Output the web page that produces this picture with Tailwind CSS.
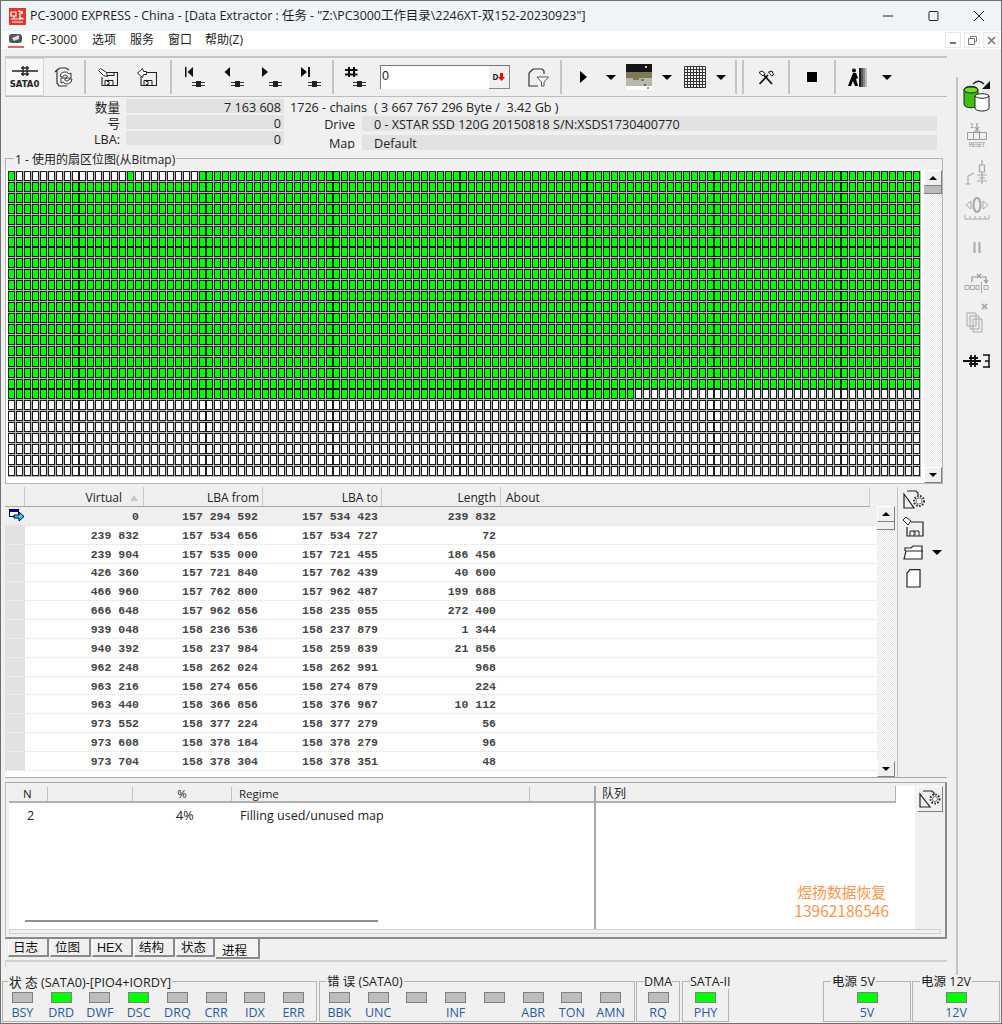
<!DOCTYPE html>
<html lang="zh">
<head>
  <meta charset="UTF-8" />
  <title>PC-3000 EXPRESS</title>
  <script src="https://cdn.jsdelivr.net/npm/@tailwindcss/browser@4"></script>
</head>
<body class="bg-[#f0f0f0]">
<div class="w-[1002px] h-[1024px] overflow-hidden flex flex-col border border-[#707070] bg-[#f0f0f0] text-[12px] leading-[14px] text-[#222] font-['Open_Sans','Noto_Sans_CJK_SC',sans-serif]">

  <!-- title bar -->
  <div class="h-[30px] shrink-0 flex items-center bg-[#eff4f9] relative">
    <svg class="ml-[8px] mr-[4px]" width="17" height="17" viewBox="0 0 17 17"><rect width="17" height="17" fill="#e8332a"/><path d="M2 4h5v4H2zM9 3h2v7h3M5 8v3M2 11h13M3 14h11" stroke="#fff" stroke-width="1.2" fill="none"/><rect x="12" y="3" width="2" height="3" fill="#fff"/></svg>
    <span class="text-[12.450px] text-[#1c1c1c] whitespace-nowrap">PC-3000 EXPRESS - China - [Data Extractor : 任务 - "Z:\PC3000工作目录\2246XT-双152-20230923"]</span>
    <div class="ml-auto flex items-center">
      <svg width="45" height="20" viewBox="0 0 45 20"><path d="M17 10h10" stroke="#222" stroke-width="1"/></svg>
      <svg width="45" height="20" viewBox="0 0 45 20"><rect x="18" y="5.5" width="9" height="9" rx="1" fill="none" stroke="#222"/></svg>
      <svg width="45" height="20" viewBox="0 0 45 20"><path d="M18 5l10 10M28 5L18 15" stroke="#222"/></svg>
    </div>
  </div>

  <!-- menu bar -->
  <div class="h-[18px] shrink-0 bg-white flex items-center">
    <svg class="ml-[7px] mr-[7px]" width="16" height="15" viewBox="0 0 16 15"><rect x="1" y="1" width="13" height="9" rx="3" fill="#555"/><path d="M4 5l7-3v4l-5 2z" fill="#ddd"/><rect y="13" width="16" height="2" fill="#e8606a"/></svg>
    <span class="w-[61px]">PC-3000</span>
    <span class="w-[38px]">选项</span>
    <span class="w-[38px]">服务</span>
    <span class="w-[37px]">窗口</span>
    <span>帮助(Z)</span>
    <div class="ml-auto mr-[2px] flex gap-[3px]">
      <div class="w-[16px] h-[16px] border border-[#e8e8e8] flex items-center justify-center"><div class="w-[6px] h-[2px] mt-[5px] bg-[#777]"></div></div>
      <div class="w-[16px] h-[16px] border border-[#e8e8e8] flex items-center justify-center"><svg width="9" height="9" viewBox="0 0 9 9"><path d="M2.5 2V.5h6v5H7M.5 2.5h6v6h-6z" fill="none" stroke="#777"/></svg></div>
      <div class="w-[16px] h-[16px] border border-[#e8e8e8] flex items-center justify-center"><svg width="9" height="9" viewBox="0 0 9 9"><path d="M1 1l7 7M8 1L1 8" stroke="#777" stroke-width="1.6"/></svg></div>
    </div>
  </div>

  <!-- workspace -->
  <div class="h-[926px] shrink-0 flex">
    <div class="w-[942px] shrink-0 ml-[4px] pt-[7px] flex flex-col">

      <!-- toolbar -->
      <div class="h-[41px] shrink-0 flex items-center border-t-2 border-b border-t-[#c6c6c6] border-b-[#bcbcbc]">
        <div class="w-[39px] h-[38px] bg-[#f7f7f7] border border-[#d4d4d4] flex flex-col items-center justify-center">
          <svg width="28" height="12" viewBox="0 0 28 12"><path d="M1 6h26M10 3h8M10 9h8M12 1v10M16 1v10" stroke="#222" stroke-width="1.4"/></svg>
          <span class="mt-[2px] text-[8.5px] leading-[10px] font-bold font-['DejaVu_Sans',sans-serif]">SATA0</span>
        </div>
        <div class="w-[40px] flex justify-center">
          <svg width="22" height="20" viewBox="0 0 22 20"><path d="M4 3l3-2h6l3 2M2 5l2-2v13l2 3h8" fill="none" stroke="#333" stroke-width="1.2"/><path d="M7 9a5 5 0 0 1 9-2l2-1v5h-5l1.500-2a3 3 0 0 0-5 1zM19 12a5 5 0 0 1-9 3l-2 1v-5h5l-1.500 2a3 3 0 0 0 5-1z" fill="#fff" stroke="#333"/></svg>
        </div>
        <div class="w-[2px] h-[34px] bg-[#c4c4c4]"></div>
        <div class="w-[44px] flex justify-center">
          <svg width="20" height="18" viewBox="0 0 20 18"><path d="M9 4.500h10.500v13H4V9" fill="none" stroke="#222" stroke-width="1.1"/><path d="M7 17.500v-5h8v5M9 13.500h2v3H9M8 4.500v3h8v-3" fill="none" stroke="#222"/><path d="M.5 2.500l2-2 6 4 1 4-4-1z" fill="#fff" stroke="#222"/></svg>
        </div>
        <div class="w-[34px] mr-[6px] flex justify-center">
          <svg width="20" height="18" viewBox="0 0 20 18"><path d="M10 4.500h9.500v13H4V9" fill="none" stroke="#222" stroke-width="1.1"/><path d="M7 17.500v-5h8v5M9 13.500h2v3H9" fill="none" stroke="#222"/><path d="M.5 5l5-4.500 1 3h3v3h-3l-1 3z" fill="#fff" stroke="#222"/></svg>
        </div>
        <div class="w-[2px] h-[34px] bg-[#c4c4c4]"></div>
        <div class="w-[45px] flex justify-center">
          <svg width="20" height="21" viewBox="0 0 20 21"><path d="M0 0h1.500v10H0zM8 0v10L2.500 5z" fill="#111"/><path d="M7 15.500h13M7 18.500h13" stroke="#333"/><rect x="11" y="14" width="5" height="6" fill="#222"/></svg>
        </div>
        <div class="w-[34px] flex justify-center">
          <svg width="20" height="21" viewBox="0 0 20 21"><path d="M6 0v10L.5 5z" fill="#111"/><path d="M7 15.500h13M7 18.500h13" stroke="#333"/><rect x="11" y="14" width="5" height="6" fill="#222"/></svg>
        </div>
        <div class="w-[42px] flex justify-center">
          <svg width="20" height="21" viewBox="0 0 20 21"><path d="M0 0v10l6-5z" fill="#111"/><path d="M7 15.500h13M7 18.500h13" stroke="#333"/><rect x="11" y="14" width="5" height="6" fill="#222"/></svg>
        </div>
        <div class="w-[35px] flex justify-center">
          <svg width="20" height="21" viewBox="0 0 20 21"><path d="M0 0v10l6-5zM7 0h2v10H7z" fill="#111"/><path d="M7 15.500h13M7 18.500h13" stroke="#333"/><rect x="11" y="14" width="5" height="6" fill="#222"/></svg>
        </div>
        <div class="w-[2px] h-[34px] ml-[4px] bg-[#c4c4c4]"></div>
        <div class="w-[42px] flex justify-center">
          <svg width="21" height="21" viewBox="0 0 21 21"><path d="M4 0v10M9 0v10M0 3h12.500M0 7.500h12.500" stroke="#111" stroke-width="2"/><path d="M8 15.500h13M8 18.500h13" stroke="#333"/><rect x="12" y="14" width="5" height="6" fill="#222"/></svg>
        </div>
        <div class="w-[130px] h-[24px] ml-[4px] flex border-t border-l border-[#777] border-b-[#ddd] border-r-[#ddd] bg-white">
          <span class="pl-[1px] pt-[3px] text-[12.500px] font-['Liberation_Sans',sans-serif]">0</span>
          <div class="ml-auto w-[21px] bg-[#f0f0f0] border-b border-r border-[#888] flex items-center justify-center text-[8px] font-bold"><span>D</span><svg width="7" height="8" viewBox="0 0 7 8"><path d="M2 0h3v4h2L3.500 8 0 4h2z" fill="#f00"/></svg></div>
        </div>
        <div class="w-[50px] pl-[6px] flex justify-center">
          <svg width="21" height="19" viewBox="0 0 21 19"><path d="M1 5l4-4h9l2 2v3M10 18H1V5" fill="none" stroke="#333" stroke-width="1.2"/><path d="M9 9h11.500l-4.500 5v4h-2.500v-4z" fill="#fff" stroke="#555"/></svg>
        </div>
        <div class="w-[2px] h-[34px] bg-[#c4c4c4]"></div>
        <div class="w-[42px] flex justify-center"><div class="w-0 h-0 border-y-[6px] border-y-transparent border-l-[7px] border-l-black"></div></div>
        <div class="w-[14px] flex justify-center"><div class="w-0 h-0 border-x-[5px] border-x-transparent border-t-[5px] border-t-black"></div></div>
        <svg class="ml-[8px]" width="26" height="26" viewBox="0 0 26 26"><rect width="26" height="8" fill="#151515"/><rect y="8" width="26" height="6" fill="#7c7a56"/><rect y="14" width="26" height="8" fill="#b8b8ac"/><rect x="7" y="12" width="6" height="4" fill="#7c7a56"/><rect x="15" y="15" width="3" height="2" fill="#7c7a56"/><rect x="19" y="2" width="2" height="2" fill="#ccc"/><rect y="22" width="26" height="4" fill="#fff"/><rect x="18" y="20" width="2" height="2" fill="#666"/><rect x="21" y="23" width="2" height="2" fill="#999"/></svg>
        <div class="w-[30px] flex justify-center"><div class="w-0 h-0 border-x-[5px] border-x-transparent border-t-[5px] border-t-black"></div></div>
        <svg class="ml-[2px]" width="22" height="22" viewBox="0 0 22 22"><path d="M.5 .5h21v21H.5zM.5 3.500h21M.5 6.500h21M.5 9.500h21M.5 12.500h21M.5 15.500h21M.5 18.500h21M3.500 .5v21M6.500 .5v21M9.500 .5v21M12.500 .5v21M15.500 .5v21M18.500 .5v21" fill="none" stroke="#333"/></svg>
        <div class="w-[29px] flex justify-center"><div class="w-0 h-0 border-x-[5px] border-x-transparent border-t-[5px] border-t-black"></div></div>
        <div class="w-[2px] h-[34px] bg-[#c4c4c4]"></div>
        <div class="w-[2px] h-[34px] ml-[5px] bg-[#c4c4c4]"></div>
        <div class="w-[44px] flex justify-center">
          <svg width="16" height="15" viewBox="0 0 16 15"><path d="M1.500 14L10 5M5 4l9 10" stroke="#111" stroke-width="1.800"/><path d="M1 2.500l3-1.500 3 2.500-2 2.500zM10.500 2l3.500-1 1.500 4-2 1-1-1.500z" fill="#fff" stroke="#111"/></svg>
        </div>
        <div class="w-[2px] h-[34px] bg-[#c4c4c4]"></div>
        <div class="w-[44px] flex justify-center"><div class="w-[10px] h-[10px] bg-black"></div></div>
        <div class="w-[2px] h-[34px] bg-[#c4c4c4]"></div>
        <div class="w-[42px] flex justify-center">
          <svg width="19" height="19" viewBox="0 0 19 19"><circle cx="6" cy="2.500" r="2" fill="#000"/><path d="M5 5L3 10l-3 8h3l2-5 2 5h3l-2-7 2-1-2-5z" fill="#000"/><rect x="11" width="2" height="19" fill="#222"/><rect x="13" width="2" height="19" fill="#555"/><rect x="15" width="2" height="19" fill="#888"/><rect x="17" width="2" height="19" fill="#bbb"/></svg>
        </div>
        <div class="w-[18px] flex justify-center"><div class="w-0 h-0 border-x-[5px] border-x-transparent border-t-[5px] border-t-black"></div></div>
      </div>

      <!-- info -->
      <div class="h-[57px] shrink-0 flex pt-[2px] text-[12.600px] leading-[17px]">
        <div class="w-[115px] shrink-0 flex flex-col gap-[2px] items-end">
          <div class="h-[14px]">数量</div>
          <div class="h-[14px]">号</div>
          <div class="h-[14px]">LBA:</div>
        </div>
        <div class="w-[158px] shrink-0 ml-[6px] flex flex-col gap-[2px]">
          <div class="h-[14px] bg-[#e2e2e2] text-right pr-[3px]">7 163 608</div>
          <div class="h-[14px] bg-[#e2e2e2] text-right pr-[3px]">0</div>
          <div class="h-[14px] bg-[#e2e2e2] text-right pr-[3px]">0</div>
        </div>
        <div class="ml-[6px] flex flex-col">
          <div class="h-[14px] flex whitespace-pre">
            <span class="w-[84px]">1726 - chains</span>
            <span>( 3 667 767 296 Byte /  3.42 Gb )</span>
          </div>
          <div class="h-[15px] mt-[3px] flex">
            <span class="w-[65px] text-right">Drive</span>
            <div class="w-[575px] ml-[7px] bg-[#e2e2e2] pl-[12px]">0 - XSTAR SSD 120G 20150818 S/N:XSDS1730400770</div>
          </div>
          <div class="h-[15px] mt-[4px] flex">
            <span class="w-[65px] text-right overflow-hidden h-[14px]">Map</span>
            <div class="w-[575px] ml-[7px] bg-[#e2e2e2] pl-[12px]">Default</div>
          </div>
        </div>
      </div>

      <!-- bitmap group -->
      <div class="h-[326px] shrink-0 mt-[4px] mr-[4px] border border-[#b4b4b4] relative flex flex-col">
        <span class="absolute left-[8px] top-[-6px] bg-[#f0f0f0] px-[1px]">1 - 使用的扇区位图(从Bitmap)</span>
        <div class="h-[11px] shrink-0"></div>
        <div class="flex-1 bg-white flex items-start">
          <div id="bitmap" class="w-[913px] h-[306px] ml-[2px] mt-[1px] bg-[#b4b4b4] grid grid-cols-[repeat(115,7.940px)] auto-rows-[10.930px]"></div>
          <div class="w-[18px] h-full ml-auto flex flex-col bg-[repeating-conic-gradient(#e4e4e4_0_25%,#fff_0_50%)] bg-[length:2px_2px]">
            <div class="h-[16px] bg-[#f0f0f0] border-t border-l border-t-white border-l-white border-b border-r border-b-[#808080] border-r-[#808080] flex items-center justify-center"><div class="w-0 h-0 border-x-[4px] border-x-transparent border-b-[4px] border-b-black"></div></div>
            <div class="h-[8px] bg-[#bbb] border-b border-r border-[#808080]"></div>
            <div class="mt-auto h-[16px] bg-[#f0f0f0] border-t border-l border-t-white border-l-white border-b border-r border-b-[#808080] border-r-[#808080] flex items-center justify-center"><div class="w-0 h-0 border-x-[4px] border-x-transparent border-t-[4px] border-t-black"></div></div>
          </div>
        </div>
      </div>

      <!-- chains table -->
      <div class="h-[291px] shrink-0 mt-[3px] flex border-b border-[#a8a8a8]">
        <div class="w-[872px] shrink-0 flex flex-col">
          <div class="h-[20px] shrink-0 w-[865px] grid grid-cols-[20px_119px_119px_119px_119px_369px] border-b border-[#a8a8a8] bg-[#efefef]">
            <div class="border-r border-[#c8c8c8]"></div>
            <div class="border-r border-[#c8c8c8] flex items-center justify-end pt-[2px]">Virtual<div class="ml-[8px] mr-[5px] w-0 h-0 border-x-[4px] border-x-transparent border-b-[6px] border-b-[#c8c8c8]"></div></div>
            <div class="border-r border-[#c8c8c8] text-right pr-[3px] pt-[4px]">LBA from</div>
            <div class="border-r border-[#c8c8c8] text-right pr-[3px] pt-[4px]">LBA to</div>
            <div class="border-r border-[#c8c8c8] text-right pr-[4px] pt-[4px]">Length</div>
            <div class="border-r border-[#c8c8c8] pl-[5px] pt-[4px]">About</div>
          </div>
          <div id="rows" class="flex-1 bg-white overflow-hidden text-[11.500px] font-['Liberation_Mono',monospace] font-bold text-[#444]"></div>
        </div>
        <div class="w-[18px] shrink-0 flex flex-col mt-[19px] bg-[repeating-conic-gradient(#e4e4e4_0_25%,#fff_0_50%)] bg-[length:2px_2px]">
          <div class="h-[16px] bg-[#f0f0f0] border-t border-l border-t-white border-l-white border-b border-r border-b-[#808080] border-r-[#808080] flex items-center justify-center"><div class="w-0 h-0 border-x-[4px] border-x-transparent border-b-[4px] border-b-black"></div></div>
          <div class="h-[8px] bg-[#f0f0f0] border-b border-r border-[#808080]"></div>
          <div class="mt-auto h-[16px] bg-[#f0f0f0] border-t border-l border-t-white border-l-white border-b border-r border-b-[#808080] border-r-[#808080] flex items-center justify-center"><div class="w-0 h-0 border-x-[4px] border-x-transparent border-t-[4px] border-t-black"></div></div>
        </div>
        <div class="flex-1 pl-[5px] pt-[3px] flex flex-col border-l border-[#c4c4c4] ml-[2px]">
          <svg width="22" height="20" viewBox="0 0 22 20"><path d="M4 1h9l2 2v2M11 18H1V4z" fill="none" stroke="#222" stroke-width="1.200"/><circle cx="16" cy="11" r="5" fill="none" stroke="#222" stroke-width="2" stroke-dasharray="1.500 1.500"/><circle cx="16" cy="11" r="3" fill="#fff" stroke="#444" stroke-width="0.700"/></svg>
          <svg class="mt-[7px]" width="21" height="20" viewBox="0 0 21 20"><path d="M8 5h12v14H4V10" fill="none" stroke="#222" stroke-width="1.200"/><path d="M7 19v-5h9v5M10 15h2v3h-2" fill="none" stroke="#222"/><path d="M0 3l3-3 5 4-3 4z" fill="#fff" stroke="#222"/></svg>
          <div class="flex items-center mt-[8px]">
            <svg width="21" height="15" viewBox="0 0 21 15"><path d="M2 6V3h6l2-2h9v13H1l2-8h17" fill="#fff" stroke="#222" stroke-width="1.200"/></svg>
            <div class="ml-[8px] w-0 h-0 border-x-[5px] border-x-transparent border-t-[5px] border-t-black"></div>
          </div>
          <svg class="mt-[9px] ml-[3px]" width="15" height="19" viewBox="0 0 15 19"><path d="M4 .7h10V18H1V4z" fill="#fff" stroke="#222" stroke-width="1.200"/></svg>
        </div>
      </div>

      <!-- lower panel -->
      <div class="h-[157px] shrink-0 mt-[4px] border border-t-[#a8a8a8] border-l-[#c0c0c0] border-r-2 border-b-2 border-r-[#8a8a8a] border-b-[#8a8a8a] pl-[3px] pt-[3px] pr-[3px] flex flex-col">
        <div class="h-[143px] shrink-0 flex">
          <div class="w-[587px] shrink-0 bg-white flex flex-col border-r-2 border-[#a8a8a8]">
            <div class="h-[17px] shrink-0 bg-[#efefef] grid grid-cols-[39px_85px_99px_298px_66px] border-b-2 border-[#b0b0b0] text-[11.500px] pt-[1px]">
              <div class="border-r border-[#c0c0c0] pl-[14px]">N</div>
              <div class="border-r border-[#c0c0c0]"></div>
              <div class="border-r border-[#c0c0c0] text-center">%</div>
              <div class="border-r border-[#c0c0c0] pl-[7px]">Regime</div>
              <div></div>
            </div>
            <div class="h-[26px] shrink-0 grid grid-cols-[39px_85px_99px_298px] items-center text-[12.600px]">
              <div class="pl-[18px]">2</div>
              <div></div>
              <div class="pl-[43px]">4%</div>
              <div class="pl-[8px]">Filling used/unused map</div>
            </div>
            <div class="mt-auto mb-[7px] ml-[16px] w-[353px] h-[2px] bg-[#909090]"></div>
          </div>
          <div class="w-[319px] shrink-0 bg-white flex flex-col relative">
            <div class="h-[17px] shrink-0 w-[300px] bg-[#efefef] border-b-2 border-r border-[#b0b0b0] pl-[6px] pt-[1px]">队列</div>
            <div class="absolute right-[26px] bottom-[9px] flex flex-col items-center text-[#f9954f] font-['Noto_Sans_CJK_SC',sans-serif]">
              <div class="text-[14.800px] leading-[19px] h-[19px]">煜扬数据恢复</div>
              <div class="text-[15.500px] leading-[19px] h-[19px]">13962186546</div>
            </div>
          </div>
          <div class="flex-1 pl-[1px]">
            <div class="w-[26px] h-[26px] ml-[1px] border-t border-l border-white border-r border-b border-r-[#808080] border-b-[#808080] flex items-center justify-center">
              <svg width="22" height="18" viewBox="0 0 22 18"><path d="M4 1h9l2 2v2M11 17H1V4z" fill="none" stroke="#222" stroke-width="1.200"/><circle cx="16" cy="9" r="4.500" fill="none" stroke="#222" stroke-width="2" stroke-dasharray="1.500 1.500"/><circle cx="16" cy="9" r="2.500" fill="#fff" stroke="#444" stroke-width="0.700"/></svg>
            </div>
          </div>
        </div>
        <div class="h-[5px] shrink-0 border border-[#cfcfcf] mr-[1px]"></div>
      </div>

      <!-- tabs -->
      <div class="h-[20px] shrink-0 flex pl-[3px] text-[#111] text-[12.500px]">
        <div class="w-[41px] h-[18px] mr-[1px] pl-[4px] pt-[2px] border-b-2 border-r-2 border-l border-l-white border-[#8a8a8a]">日志</div>
        <div class="w-[41px] h-[18px] mr-[1px] pl-[4px] pt-[2px] border-b-2 border-r-2 border-l border-l-white border-[#8a8a8a]">位图</div>
        <div class="w-[41px] h-[18px] mr-[1px] pl-[4px] pt-[2px] border-b-2 border-r-2 border-l border-l-white border-[#8a8a8a] font-['Liberation_Sans',sans-serif]">HEX</div>
        <div class="w-[41px] h-[18px] mr-[1px] pl-[4px] pt-[2px] border-b-2 border-r-2 border-l border-l-white border-[#8a8a8a]">结构</div>
        <div class="w-[39px] h-[18px] mr-[1px] pl-[4px] pt-[2px] border-b-2 border-r-2 border-l border-l-white border-[#8a8a8a]">状态</div>
        <div class="w-[44px] h-[20px] pl-[6px] pt-[5px] border-b-2 border-r-2 border-[#8a8a8a] bg-[#f3f3f3]">进程</div>
      </div>
      <div class="h-[7px] shrink-0 mt-[1px] border-t-2 border-l border-[#d0d0d0]"></div>
    </div>

    <!-- right sidebar -->
    <div class="flex-1 ml-[9px] mt-[28px] border-l-2 border-[#c4c4c4] flex flex-col items-center pr-[6px] pt-[3px]">
      <svg width="28" height="32" viewBox="0 0 28 32"><path d="M1 10c0-5 14-5 14 0v14c0 5-14 5-14 0z" fill="#3fbf10" stroke="#222"/><ellipse cx="8" cy="10" rx="7" ry="3" fill="#6fe030" stroke="#222"/><path d="M12 16c0-3 14-3 14 0v12c0 4-14 4-14 0z" fill="#fff" stroke="#222"/><path d="M12 16c2 3 12 3 14 0" fill="none" stroke="#222"/><path d="M10 4c4-4 8-3 11 0" fill="none" stroke="#222" stroke-width="1.300"/><path d="M27 1v8h-8z" fill="#111"/></svg>
      <svg class="mt-[10px]" width="22" height="26" viewBox="0 0 22 26"><text x="4" y="6" font-size="7" fill="#888" font-family="Liberation Sans">1</text><path d="M11 1v6M9 5l2 3 2-3M8 9h6" fill="none" stroke="#888"/><path d="M1.500 10.500h19v7h-19zM7.500 10.500v7M13.500 10.500v7" fill="none" stroke="#999"/><text x="2.500" y="25" font-size="6.500" fill="#999" font-family="DejaVu Sans" textLength="17">RESET</text></svg>
      <svg class="mt-[12px]" width="26" height="26" viewBox="0 0 26 26"><path d="M18 0v5M15.500 5h5v7h-5zM18 12v12M13 15h10M15 18h6M13 21h10M1 24h6M4 24v-8l6-3" fill="none" stroke="#aaa" stroke-width="1.200"/></svg>
      <svg class="mt-[11px]" width="26" height="26" viewBox="0 0 26 26"><ellipse cx="13" cy="8" rx="3.500" ry="7" fill="none" stroke="#aaa" stroke-width="2.200"/><path d="M7 4v8L2 8zM19 4v8l5-4zM1 22h24M1 18v4M6 19v3M11 19v3M16 19v3M21 19v3M25 18v4" fill="none" stroke="#aaa"/></svg>
      <svg class="mt-[18px]" width="10" height="13" viewBox="0 0 10 13"><path d="M2.500 1v11M7.500 1v11" stroke="#aaa" stroke-width="2"/></svg>
      <svg class="mt-[19px]" width="26" height="20" viewBox="0 0 26 20"><path d="M8 9V4h14v5M13 1l4 4M17 1l-4 4M20 7l2 3 2-3" fill="none" stroke="#999" stroke-width="1.200"/><path d="M1 12.500h4v4H1zM6.500 12.500h4v4h-4zM12 12.500h3v4h-3zM20 12.500h4v4h-4zM17.500 9v11" fill="none" stroke="#aaa"/></svg>
      <svg class="mt-[10px]" width="24" height="31" viewBox="0 0 24 31"><path d="M2 10h9v13H2zM5 13h9v13H5zM8 16h9v13H8z" fill="#eee" stroke="#aaa"/><path d="M17 1l5 5M22 1l-5 5" stroke="#aaa" stroke-width="1.800"/></svg>
      <svg class="mt-[20px]" width="28" height="14" viewBox="0 0 28 14"><path d="M0 7h18M6 4h9M6 10h9M8 1v12M12 1v12" stroke="#111" stroke-width="1.800"/><path d="M20 1h7M20 13h7M26 1v12M22 7h4" fill="none" stroke="#111" stroke-width="1.500"/></svg>
    </div>
  </div>

  <!-- status groups -->
  <div class="h-[47px] shrink-0 pt-[6px] pl-[1px] flex text-[12.500px]">
    <div class="w-[315px] h-[41px] border border-[#b4b4b4] relative">
      <span class="absolute left-[5px] top-[-7px] bg-[#f0f0f0] px-[1px] whitespace-nowrap text-[12.700px]">状 态 (SATA0)-[PIO4+IORDY]</span>
      <div id="ledsA" class="grid grid-cols-[repeat(8,38.750px)] pt-[10px]"></div>
    </div>
    <div class="w-[316px] h-[41px] ml-[2px] border border-[#b4b4b4] relative">
      <span class="absolute left-[6px] top-[-7px] bg-[#f0f0f0] px-[1px] whitespace-nowrap">错 误 (SATA0)</span>
      <div id="ledsB" class="grid grid-cols-[repeat(8,38.750px)] pt-[10px]"></div>
    </div>
    <div class="w-[44px] h-[41px] ml-[1px] border border-[#b4b4b4] relative">
      <span class="absolute left-[7px] top-[-7px] bg-[#f0f0f0] whitespace-nowrap">DMA</span>
      <div class="flex flex-col items-center pt-[10px]"><div class="w-[21px] h-[11px] border border-[#808080] bg-[#bdbdbd]"></div><span class="mt-[3px] text-[#2b5c9e]">RQ</span></div>
    </div>
    <div class="w-[47px] h-[41px] ml-[2px] border border-[#b4b4b4] relative">
      <span class="absolute left-[7px] top-[-7px] bg-[#f0f0f0] whitespace-nowrap">SATA-II</span>
      <div class="flex flex-col items-center pt-[10px]"><div class="w-[21px] h-[11px] border border-[#808080] bg-[#00ff00]"></div><span class="mt-[3px] text-[#2b5c9e]">PHY</span></div>
    </div>
    <div class="w-[88px] h-[41px] ml-[94px] border border-[#b4b4b4] relative">
      <span class="absolute left-[7px] top-[-7px] bg-[#f0f0f0] px-[1px] whitespace-nowrap">电源 5V</span>
      <div class="flex flex-col items-center pt-[10px]"><div class="w-[21px] h-[11px] border border-[#808080] bg-[#00ff00]"></div><span class="mt-[3px] text-[#2b5c9e]">5V</span></div>
    </div>
    <div class="w-[88px] h-[41px] ml-[1px] border border-[#b4b4b4] relative">
      <span class="absolute left-[7px] top-[-7px] bg-[#f0f0f0] px-[1px] whitespace-nowrap">电源 12V</span>
      <div class="flex flex-col items-center pt-[10px]"><div class="w-[21px] h-[11px] border border-[#808080] bg-[#00ff00]"></div><span class="mt-[3px] text-[#2b5c9e]">12V</span></div>
    </div>
  </div>
</div>

<script>
  // 位图
  var cells = [];
  for (var r = 0; r < 28; r++) {
    for (var c = 0; c < 115; c++) {
      var green = r < 20 || (r === 20 && c < 79);
      if (r === 0 && c > 0 && c < 24 && c !== 15) green = false;
      cells.push('<div class="w-[7px] h-[10px] border border-[#1c1c1c] ' + (green ? 'bg-[#00ff00]' : 'bg-white') + '"></div>');
    }
  }
  document.getElementById('bitmap').innerHTML = cells.join('');

  // 链表
  var rows = [
    ['0','157 294 592','157 534 423','239 832'],
    ['239 832','157 534 656','157 534 727','72'],
    ['239 904','157 535 000','157 721 455','186 456'],
    ['426 360','157 721 840','157 762 439','40 600'],
    ['466 960','157 762 800','157 962 487','199 688'],
    ['666 648','157 962 656','158 235 055','272 400'],
    ['939 048','158 236 536','158 237 879','1 344'],
    ['940 392','158 237 984','158 259 839','21 856'],
    ['962 248','158 262 024','158 262 991','968'],
    ['963 216','158 274 656','158 274 879','224'],
    ['963 440','158 366 856','158 376 967','10 112'],
    ['973 552','158 377 224','158 377 279','56'],
    ['973 608','158 378 184','158 378 279','96'],
    ['973 704','158 378 304','158 378 351','48']
  ];
  var arrow = '<svg width="16" height="13" viewBox="0 0 16 13"><rect x="0.500" y="0.500" width="9" height="7" fill="#fff" stroke="#003"/><rect x="1" y="1" width="8" height="2" fill="#00a"/><path d="M5 6h5V3l5 4.500-5 4.500V9H5z" fill="#2fd0f0" stroke="#003"/></svg>';
  document.getElementById('rows').innerHTML = rows.map(function (row, i) {
    return '<div class="h-[18.850px] grid grid-cols-[20px_119px_119px_119px_119px_1fr] border-b border-dotted border-[#dcdcdc] items-center text-right ' + (i === 0 ? 'bg-[#efefef]' : '') + '">' +
      '<div class="h-full flex items-center pl-[4px] ' + (i === 0 ? '' : 'bg-[#e2e2e2]') + '">' + (i === 0 ? arrow : '') + '</div>' +
      '<div class="pr-[5px] pt-[2px]">' + row[0] + '</div><div class="pr-[5px] pt-[2px]">' + row[1] + '</div><div class="pr-[4px] pt-[2px]">' + row[2] + '</div><div class="pr-[5px] pt-[2px]">' + row[3] + '</div><div></div></div>';
  }).join('');

  // 状态灯
  function leds(id, names, on) {
    document.getElementById(id).innerHTML = names.map(function (n) {
      return '<div class="flex flex-col items-center"><div class="w-[21px] h-[11px] border border-[#808080] ' + (on.indexOf(n) >= 0 ? 'bg-[#00ff00]' : 'bg-[#bdbdbd]') + '"></div><span class="mt-[3px] h-[14px] text-[#2b5c9e]">' + n + '</span></div>';
    }).join('');
  }
  leds('ledsA', ['BSY','DRD','DWF','DSC','DRQ','CRR','IDX','ERR'], ['DRD','DSC']);
  leds('ledsB', ['BBK','UNC','','INF','','ABR','TON','AMN'], []);
</script>
</body>
</html>
